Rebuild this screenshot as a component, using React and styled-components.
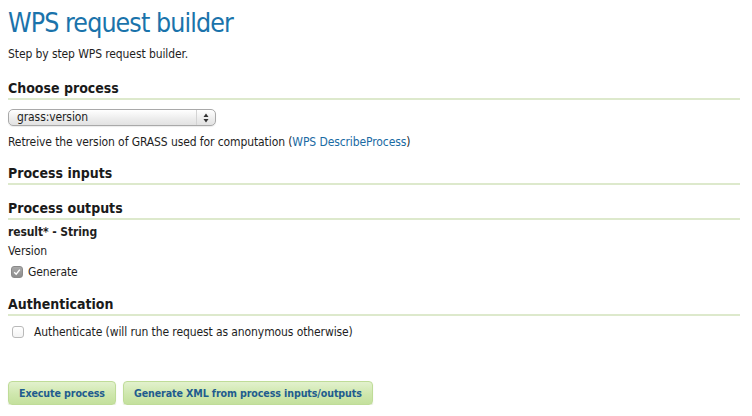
import React from 'react'
import styled, { createGlobalStyle } from 'styled-components'

const GlobalStyle = createGlobalStyle`
  body {
    margin: 0;
    background: #fff;
    color: #1e1e1e;
    font-family: "DejaVu Sans Condensed", "DejaVu Sans", Verdana, sans-serif;
    font-stretch: condensed;
  }
`

const Page = styled.div`
  padding: 4px 12px 0 8px;
  font-size: 12px;
  letter-spacing: -0.1px;
`

const Title = styled.h1`
  margin: 0;
  font-size: 26.5px;
  line-height: 37px;
  letter-spacing: -0.9px;
  font-weight: normal;
  color: #1a73ab;
`

const Text = styled.p`
  margin: ${(p) => p.$top || 0}px 0 0;
  line-height: 16px;
  font-weight: ${(p) => (p.$bold ? 'bold' : 'normal')};
`

const Link = styled.a`
  color: #1a6aa3;
  text-decoration: none;
`

const SectionTitle = styled.h2`
  margin: ${(p) => p.$top}px 0 0;
  padding-bottom: 1px;
  font-size: 14px;
  line-height: 18px;
  letter-spacing: 0;
  font-weight: bold;
  color: #1a1a1a;
  border-bottom: 2px solid #dde9cc;
`

const Select = styled.div`
  margin-top: 9px;
  width: 208px;
  height: 17px;
  box-sizing: border-box;
  display: flex;
  align-items: center;
  border: 1px solid #a9a9a9;
  border-radius: 5px;
  background: linear-gradient(#ffffff, #ececec 60%, #e2e2e2);
  box-shadow: 0 1px 1px rgba(0, 0, 0, 0.08);
`

const SelectValue = styled.span`
  flex: 1;
  padding-left: 8px;
  font-size: 12px;
  line-height: 15px;
`

const SelectArrows = styled.span`
  width: 18px;
  height: 100%;
  display: flex;
  align-items: center;
  justify-content: center;
  border-left: 1px solid #d4d4d4;
`

const CheckRow = styled.label`
  margin: ${(p) => p.$top}px 0 0 ${(p) => p.$indent}px;
  display: flex;
  align-items: center;
  gap: ${(p) => p.$gap}px;
  line-height: 16px;
`

const Box = styled.span`
  width: 12px;
  height: 12px;
  box-sizing: border-box;
  border-radius: 3px;
  display: flex;
  align-items: center;
  justify-content: center;
  border: 1px solid ${(p) => (p.$checked ? '#8a8a8a' : '#b9b9b9')};
  background: ${(p) =>
    p.$checked ? 'linear-gradient(#a9a9a9, #8d8d8d)' : 'linear-gradient(#ffffff, #f3f3f3)'};
`

const Actions = styled.div`
  margin-top: 41px;
  display: flex;
  gap: 7px;
`

const Button = styled.button`
  height: 24px;
  padding: 0 10px;
  border: 1px solid #bfdc98;
  border-radius: 4px;
  background: linear-gradient(#e2f1cd, #cfe7ad 55%, #c4e09d);
  box-shadow: 0 1px 1px rgba(120, 150, 80, 0.25);
  color: #1f5c8e;
  font-family: inherit;
  font-stretch: condensed;
  font-size: 10.6px;
  letter-spacing: -0.1px;
  font-weight: bold;
  cursor: pointer;
`

function Checkbox({ checked }) {
  return (
    <Box $checked={checked}>
      {checked && (
        <svg width="8" height="8" viewBox="0 0 8 8">
          <path d="M1.2 4.2 L3.2 6.2 L6.8 1.6" fill="none" stroke="#fff" strokeWidth="1.4" />
        </svg>
      )}
    </Box>
  )
}

export default function App() {
  return (
    <Page>
      <GlobalStyle />
      <Title>WPS request builder</Title>
      <Text $top={5}>Step by step WPS request builder.</Text>

      <SectionTitle $top={17}>Choose process</SectionTitle>
      <Select>
        <SelectValue>grass:version</SelectValue>
        <SelectArrows>
          <svg width="6" height="10" viewBox="0 0 6 10">
            <path d="M3 0.5 L5.5 4 L0.5 4 Z M3 9.5 L5.5 6 L0.5 6 Z" fill="#333" />
          </svg>
        </SelectArrows>
      </Select>
      <Text $top={8}>
        Retreive the version of GRASS used for computation (
        <Link href="#">WPS DescribeProcess</Link>)
      </Text>

      <SectionTitle $top={14}>Process inputs</SectionTitle>

      <SectionTitle $top={14}>Process outputs</SectionTitle>
      <Text $top={4} $bold>
        result* - String
      </Text>
      <Text $top={3}>Version</Text>
      <CheckRow $top={5} $indent={3} $gap={5}>
        <Checkbox checked />
        Generate
      </CheckRow>

      <SectionTitle $top={15}>Authentication</SectionTitle>
      <CheckRow $top={8} $indent={4} $gap={10}>
        <Checkbox />
        Authenticate (will run the request as anonymous otherwise)
      </CheckRow>

      <Actions>
        <Button>Execute process</Button>
        <Button>Generate XML from process inputs/outputs</Button>
      </Actions>
    </Page>
  )
}
